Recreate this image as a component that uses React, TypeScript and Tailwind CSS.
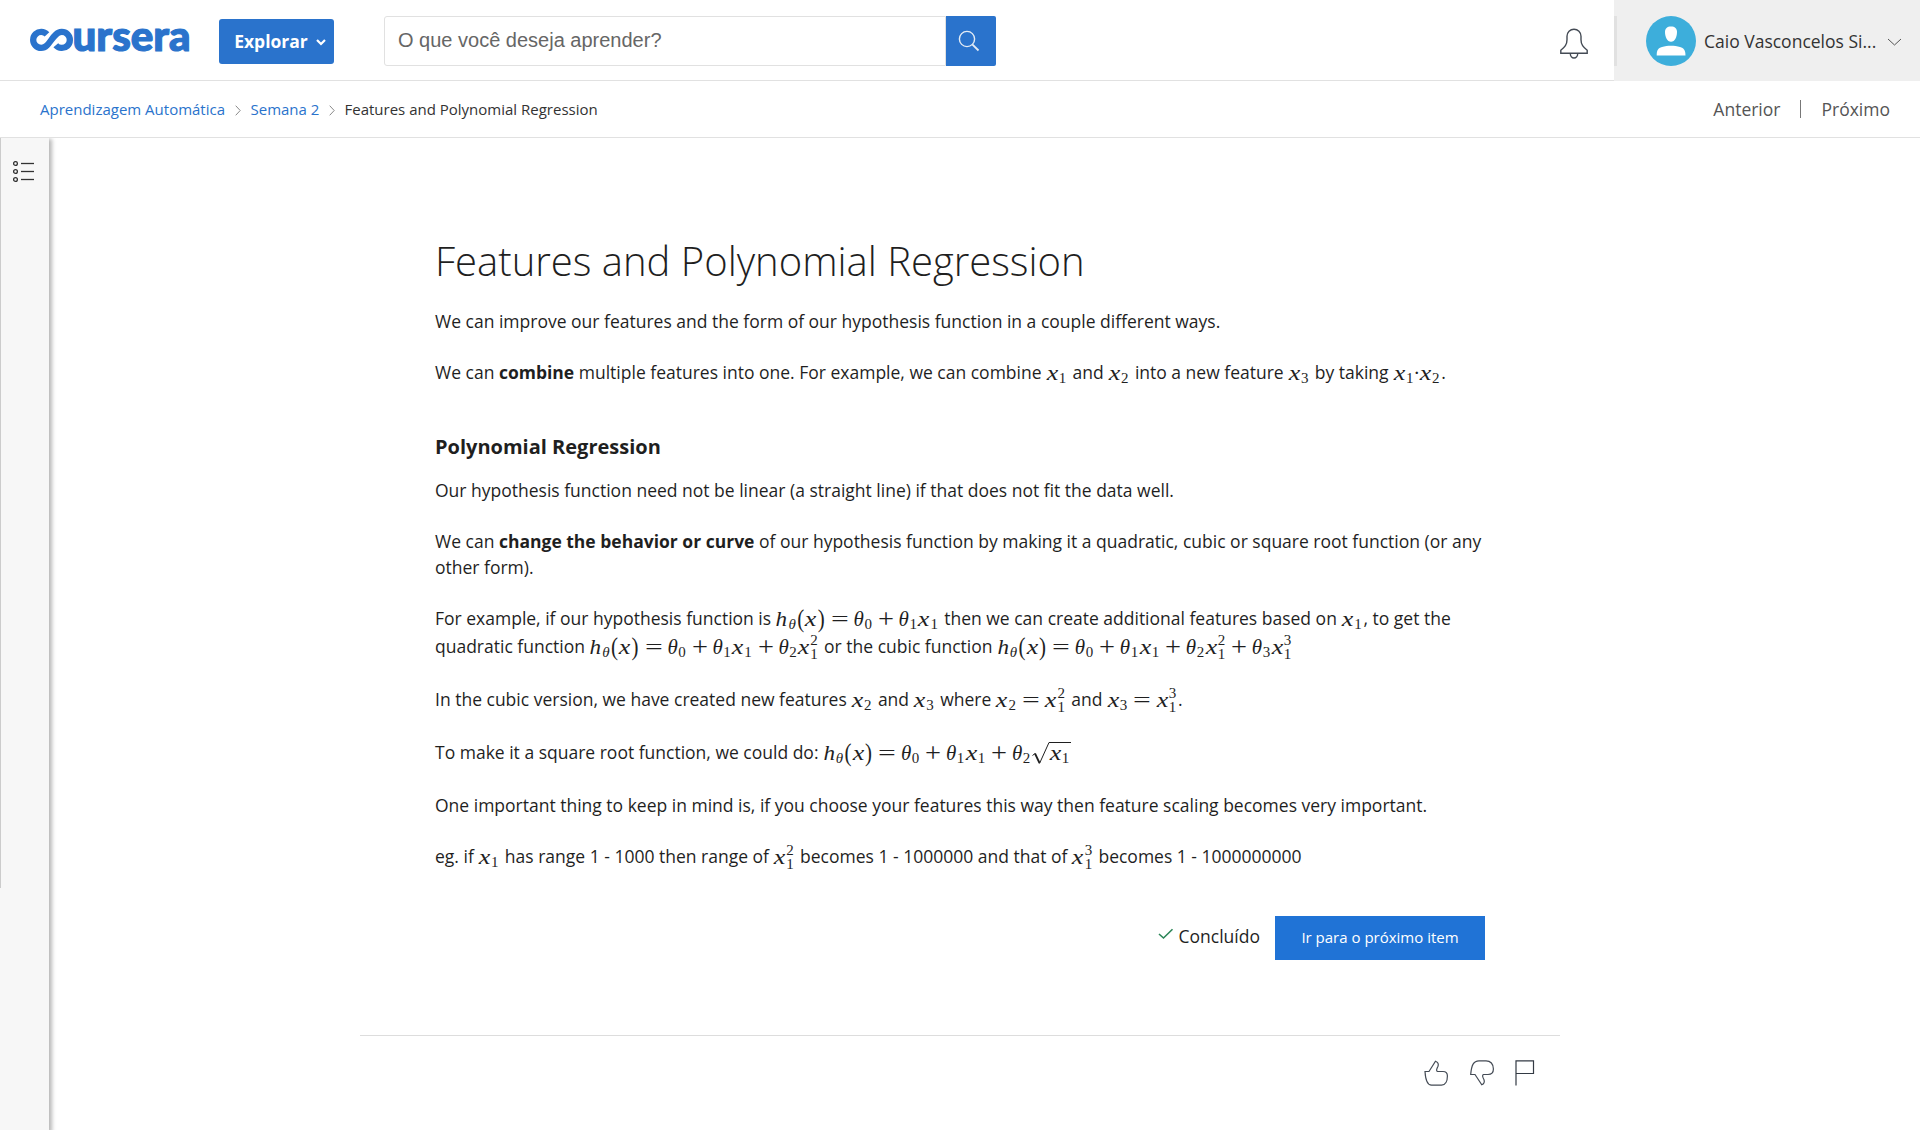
import React from "react";

const os = "font-['Open_Sans',sans-serif]";

/* One glyph of a formula: a box of fixed advance, the glyph may be stretched */
function G({ c, w, cls = "" }: { c: string; w: string; cls?: string }) {
  return (
    <span className={`inline-flex justify-center leading-none ${w}`}>
      <span className={`inline-block origin-center ${cls}`}>{c}</span>
    </span>
  );
}

const X = () => <G c="x" w="w-[12px]" cls="italic scale-x-[1.3] text-[20px]" />;
const H = () => (
  <>
    <G c="h" w="w-[12px]" cls="italic scale-x-[1.1]" />
    <Sub n="θ" italic />
    <G c="(" w="w-[8px]" cls="scale-y-[1.2]" />
    <X />
    <G c=")" w="w-[9px]" cls="scale-y-[1.2]" />
  </>
);
const Sub = ({ n, italic = false }: { n: string; italic?: boolean }) => (
  <span
    className={`relative top-[3px] inline-flex w-[9px] justify-center text-[15px] leading-none ${italic ? "italic" : ""}`}
  >
    {n}
  </span>
);
const SupSub = ({ p }: { p: string }) => (
  <span className="relative inline-flex w-[9px] justify-center text-[15px] leading-none">
    <span className="relative top-[5px]">1</span>
    <span className="absolute -top-[9px]">{p}</span>
  </span>
);
const Th = ({ n }: { n: string }) => (
  <>
    <G c="θ" w="w-[10px]" cls="italic" />
    <Sub n={n} />
  </>
);
const Eq = () => <G c="=" w="w-[28px]" cls="scale-x-[1.5]" />;
const Plus = () => <G c="+" w="w-[26px]" cls="scale-[1.35]" />;

function M({ children }: { children: React.ReactNode }) {
  return (
    <span className="relative top-px inline-flex items-baseline whitespace-nowrap pr-px font-['Liberation_Serif',serif] text-[21px] leading-[20px]">
      {children}
    </span>
  );
}
const Xn = ({ n }: { n: string }) => (
  <M>
    <X />
    <Sub n={n} />
  </M>
);

function Logo() {
  return (
    <svg width="170" height="62" viewBox="0 -20 170 62" className="block" role="img" aria-label="coursera">
      <path
        d="M17 6.400A8 8 0 1 0 16.800 17.600C20 14.500 22.500 9.500 26 6.500A8 8 0 1 1 25.800 17.200"
        fill="none"
        stroke="#2a73cc"
        strokeWidth="6.300"
      />
      <text x="42.500" y="22.600" fontFamily="Lato" fontWeight="900" fontSize="42" textLength="118" lengthAdjust="spacingAndGlyphs" fill="#2a73cc" stroke="#2a73cc" strokeWidth="1.200">
        ursera
      </text>
    </svg>
  );
}

function Header() {
  return (
    <header className="flex h-[81px] border-b border-[#e1e1e1]">
      <div className="ml-[30px] mt-[8px] w-[170px]">
        <Logo />
      </div>
      <button className={`ml-[19px] mt-[19px] flex h-[45px] w-[115px] items-center rounded-[3px] bg-[#2a73cc] pl-[15px] text-[17.5px] font-bold text-white ${os}`}>
        <span className="w-[74px]">Explorar</span>
        <svg width="10" height="7" viewBox="0 0 10 7" className="ml-[8px] mt-[2px]" fill="none" stroke="#fff" strokeWidth="2.2">
          <path d="M1 1l4 4 4-4" />
        </svg>
      </button>
      <div className="ml-[50px] mt-[16px] flex h-[50px] w-[612px]">
        <div className="w-[562px] rounded-l-[3px] border border-[#e1e1e1] pl-[13px] font-['Liberation_Sans',sans-serif] text-[20px] leading-[46px] text-[#666]">
          O que você deseja aprender?
        </div>
        <div className="flex w-[50px] items-center justify-center rounded-r-[2px] bg-[#2a73cc]">
          <svg width="22" height="22" viewBox="0 0 22 22" fill="none" stroke="#e4ecf5" strokeWidth="1.4" className="-ml-[5px]">
            <circle cx="9" cy="9" r="7.6" />
            <path d="M14.3 14.3L20.5 20.5" strokeWidth="1.8" />
          </svg>
        </div>
      </div>
      <div className="ml-auto flex">
        <svg width="30" height="32" viewBox="0 0 30 32" fill="none" stroke="#444b55" strokeWidth="1.4" className="mr-[25px] mt-[28px]">
          <path d="M1.8 25.3v-3c4-3.3 6.2-5.500 6.200-10.500v-3.500a7 7 0 0 1 14 0v3.500c0 5 2.200 7.200 6.200 10.500v3z" />
          <path d="M11.300 25.500a3.700 4.500 0 0 0 7.400 0" />
        </svg>
        <div className="flex h-[81px] w-[306px] bg-[#efefef]">
          <div className="mt-[16px] h-[50px] w-[3px] bg-[#e1e1e1]" />
          <svg width="50" height="50" viewBox="0 0 50 50" className="ml-[29px] mt-[16px]">
            <circle cx="25" cy="25" r="25" fill="#3daedb" />
            <path d="M25 10.500c3.800 0 6 2 6 5.500 0 5-2.200 9.700-6 9.700s-6-4.700-6-9.700c0-3.500 2.200-5.500 6-5.500z" fill="#fff" />
            <path d="M10.700 39.500c0-5.500 1.300-7.200 5.300-8.500 5.500-1.700 12.500-1.700 18 0 4 1.300 5.300 3 5.500 8.500z" fill="#fff" />
          </svg>
          <div className={`ml-[8px] w-[183px] whitespace-nowrap text-[17.5px] leading-[83px] text-[#333] ${os}`}>Caio Vasconcelos Si...</div>
          <svg width="15" height="8" viewBox="0 0 15 8" fill="none" stroke="#555" className="mt-[38px]">
            <path d="M1 1l6.500 6L14 1" />
          </svg>
        </div>
      </div>
    </header>
  );
}

const Sep = () => (
  <svg width="6" height="11" viewBox="0 0 6 11" fill="none" stroke="#888" className="mt-[3px]">
    <path d="M.7 .7l4.500 4.800L.7 10.300" />
  </svg>
);

function Crumbs() {
  return (
    <nav className={`flex h-[57px] items-center border-b border-[#e1e1e1] pl-[40px] pr-[30px] text-[15px] text-[#2a73cc] ${os}`}>
      <span className="w-[195px]">Aprendizagem Automática</span>
      <Sep />
      <span className="ml-[9.5px] w-[78.5px]">Semana 2</span>
      <Sep />
      <span className="ml-[9.5px] text-[#333]">Features and Polynomial Regression</span>
      <span className="ml-auto text-[17.5px] text-[#555]">Anterior</span>
      <span className="ml-[20px] h-[18px] w-px bg-[#777]" />
      <span className="ml-[20px] text-[17.5px] text-[#555]">Próximo</span>
    </nav>
  );
}

function Side() {
  return (
    <aside className="h-[992px] w-[49px] shrink-0 bg-[#f7f7f7] shadow-[2px_2px_4px_1px_rgba(0,0,0,0.28)]">
      <div className="h-[750px] border-l border-[#ccc] pl-[12px] pt-[23px]">
        <svg width="22" height="22" viewBox="0 0 22 22" fill="none" stroke="#333" strokeWidth="1.3">
          {[2.5, 10.500, 18.500].map((y) => (
            <g key={y}>
              <circle cx="2.500" cy={y} r="1.900" />
              <path d={`M8 ${y}H21`} />
            </g>
          ))}
        </svg>
      </div>
    </aside>
  );
}

function Article() {
  return (
    <article className={`ml-[386px] w-[1065px] pt-[96px] text-[17.5px] leading-[26px] text-[#1f1f1f] ${os}`}>
      <h1 className="text-[40px] font-light leading-[54px]">Features and Polynomial Regression</h1>
      <p className="mt-[20px]">We can improve our features and the form of our hypothesis function in a couple different ways.</p>
      <p className="mt-[25px]">
        We can <b>combine</b> multiple features into one. For example, we can combine <Xn n="1" /> and <Xn n="2" /> into a new feature{" "}
        <Xn n="3" /> by taking <Xn n="1" />
        <M><G c="·" w="w-[3px]" /></M>
        <Xn n="2" />.
      </p>
      <h2 className="mt-[49px] text-[20px] font-bold">Polynomial Regression</h2>
      <p className="mt-[17px]">Our hypothesis function need not be linear (a straight line) if that does not fit the data well.</p>
      <p className="mt-[25px]">
        We can <b>change the behavior or curve</b> of our hypothesis function by making it a quadratic, cubic or square root function (or any
        <br />
        other form).
      </p>
      <div className="mt-[25px] whitespace-nowrap">
        <p>
          For example, if our hypothesis function is <M><H /><Eq /><Th n="0" /><Plus /><Th n="1" /><X /><Sub n="1" /></M> then we can create
          additional features based on <Xn n="1" />, to get the
        </p>
        <p className="mt-[2px]">
          quadratic function <M><H /><Eq /><Th n="0" /><Plus /><Th n="1" /><X /><Sub n="1" /><Plus /><Th n="2" /><X /><SupSub p="2" /></M> or the cubic
          function <M><H /><Eq /><Th n="0" /><Plus /><Th n="1" /><X /><Sub n="1" /><Plus /><Th n="2" /><X /><SupSub p="2" /><Plus /><Th n="3" /><X /><SupSub p="3" /></M>
        </p>
      </div>
      <p className="mt-[27px]">
        In the cubic version, we have created new features <Xn n="2" /> and <Xn n="3" /> where <M><X /><Sub n="2" /><Eq /><X /><SupSub p="2" /></M> and{" "}
        <M><X /><Sub n="3" /><Eq /><X /><SupSub p="3" /></M>.
      </p>
      <p className="mt-[27px]">
        To make it a square root function, we could do:{" "}
        <M>
          <H /><Eq /><Th n="0" /><Plus /><Th n="1" /><X /><Sub n="1" /><Plus /><Th n="2" />
          <span className="relative inline-flex items-baseline pl-[18px]">
            <svg width="40" height="24" viewBox="0 0 40 24" fill="none" stroke="#1f1f1f" className="absolute -top-[2px] left-0">
              <path d="M1.500 14.500L4 12.500" />
              <path d="M4 12.500L8.500 22" strokeWidth="1.800" />
              <path d="M8.500 22.500L18 1.500H40" />
            </svg>
            <X /><Sub n="1" />
          </span>
        </M>
      </p>
      <p className="mt-[27px]">One important thing to keep in mind is, if you choose your features this way then feature scaling becomes very important.</p>
      <p className="mt-[25px]">
        eg. if <Xn n="1" /> has range 1 - 1000 then range of <M><X /><SupSub p="2" /></M> becomes 1 - 1000000 and that of{" "}
        <M><X /><SupSub p="3" /></M> becomes 1 - 1000000000
      </p>
    </article>
  );
}

function Footer() {
  return (
    <>
      <div className={`ml-[386px] mt-[47px] flex w-[1050px] justify-end ${os}`}>
        <svg width="16" height="12" viewBox="0 0 16 12" fill="none" stroke="#2c8658" strokeWidth="1.600" className="mr-[5px] mt-[12px]">
          <path d="M1 6l4.500 4L14.500 1.200" />
        </svg>
        <span className="text-[17.5px] leading-[40px] text-[#1f1f1f]">Concluído</span>
        <button className="ml-[15px] h-[44px] w-[210px] bg-[#2073d6] pb-[2px] text-[15px] text-white">Ir para o próximo item</button>
      </div>
      <div className="ml-[311px] mt-[75px] flex w-[1200px] justify-end gap-[22px] border-t border-[#ddd] pr-[25px] pt-[24px]">
        <svg width="24" height="26" viewBox="0 0 24 26" fill="none" stroke="#444b55" strokeWidth="1.200">
          <path d="M1 11.500H5L11.500 1.200C14 2 14.800 4 14 6.200C12.500 9 12 11 13.500 11.500H19C22 11.500 23.400 13.500 23.400 16C23.400 21 21.500 25.200 17.500 25.200H7.500C3.500 25.200 1.500 20 1 11.500Z" />
        </svg>
        <svg width="24" height="26" viewBox="0 0 24 26" fill="none" stroke="#444b55" strokeWidth="1.200" className="-mr-px">
          <path d="M.7 14.500H5L11.800 24.800C14 24 14.800 22 14 19.800C12.500 17 12 15 13.500 14.500H18C22 14.500 23.400 12 23.400 9C23.400 4 20.500 .8 16 .8H9C3.500 .8 1.500 5 .7 14.500Z" />
        </svg>
        <svg width="20" height="26" viewBox="0 0 20 26" fill="none" stroke="#333a44" strokeWidth="1.200">
          <path d="M1 25.500V.8H18.500V13.500H1" />
        </svg>
      </div>
    </>
  );
}

export default function App() {
  return (
    <div className="h-[1130px] w-[1920px] overflow-hidden bg-white">
      <Header />
      <Crumbs />
      <div className="flex h-[992px] overflow-hidden">
        <Side />
        <main>
          <Article />
          <Footer />
        </main>
      </div>
    </div>
  );
}
